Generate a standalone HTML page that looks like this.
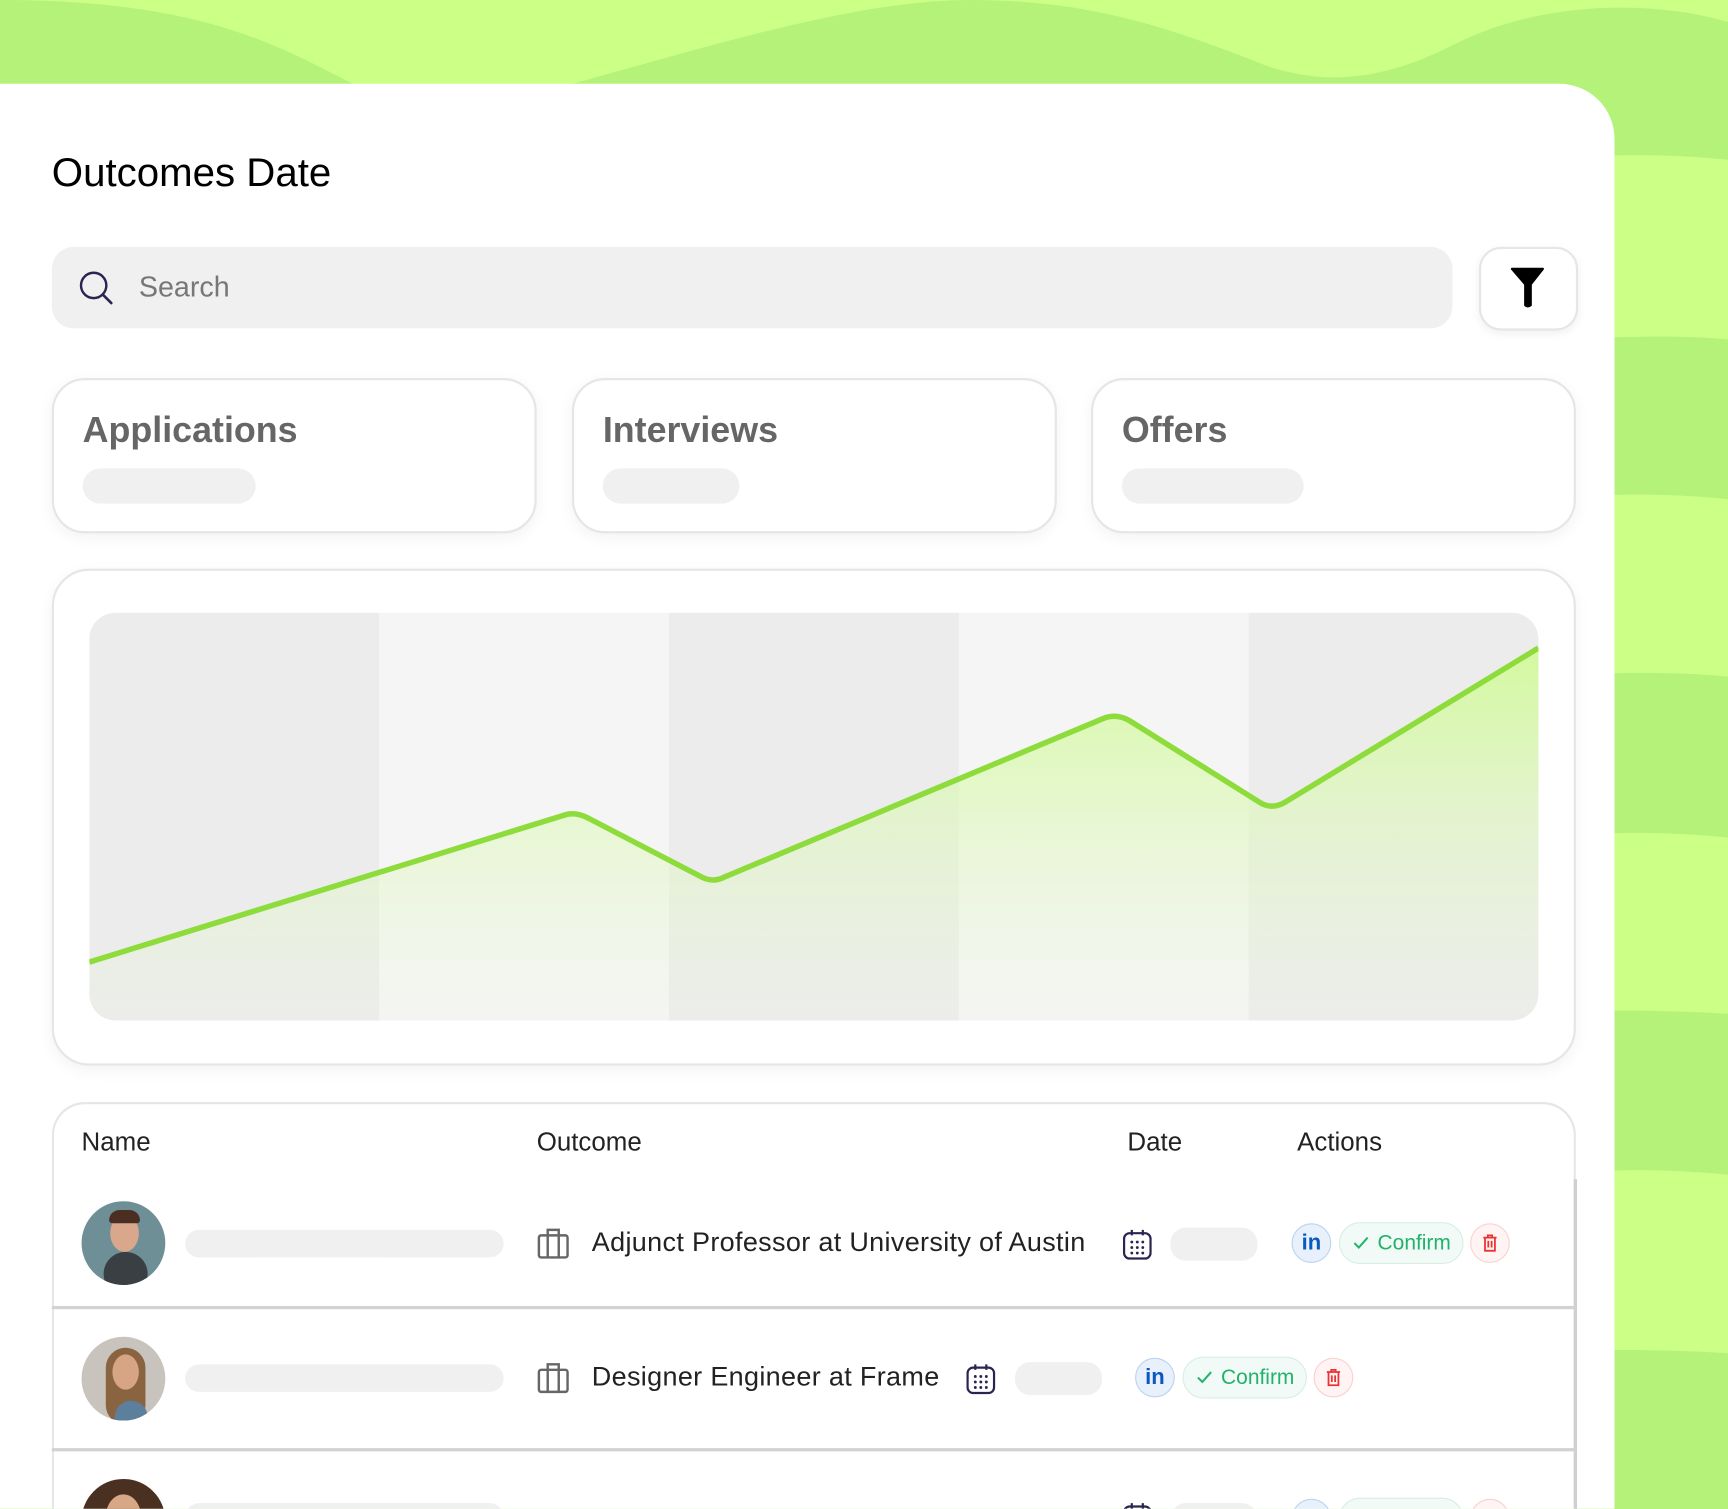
<!DOCTYPE html>
<html><head><meta charset="utf-8"><style>
html,body{margin:0;padding:0;width:1728px;height:1509px;overflow:hidden;background:#b5f27a}
#w{position:absolute;left:0;top:0;width:1568px;height:1369px;overflow:hidden;transform:scale(1.10204);transform-origin:0 0;font-family:"Liberation Sans",sans-serif}
.abs{position:absolute}
.card{position:absolute;background:#fff;border:2px solid #e6e6e6;box-shadow:0 4px 14px rgba(0,0,0,.05)}
.pill{position:absolute;background:#f0f0f0;border-radius:16px}
.stat{font-size:32.5px;font-weight:bold;color:#666;position:absolute;left:26px;top:27px}
.th{position:absolute;top:1023px;font-size:23.5px;color:#222}
.txt{position:absolute;font-size:24.5px;color:#222;letter-spacing:.3px}
.circ{position:absolute;width:36px;height:36px;border-radius:50%;box-sizing:border-box}
.in{background:#e8f1fb;border:1.5px solid #b9d3f0;color:#0a58c2;font-weight:bold;font-size:20px;text-align:center;line-height:34px}
.tr{background:#fff3f3;border:1.5px solid #fbd0d0}
.cf{position:absolute;height:38px;width:113px;border-radius:20px;background:#f1faf6;border:1.5px solid #d6efe3;box-sizing:border-box;color:#22b26a;font-size:19px;line-height:38px;padding-left:34px}
.cf svg{position:absolute;left:12px;top:12px}
.av{position:absolute;width:76px;height:76px;border-radius:50%;overflow:hidden}
</style></head><body><div id="w">
<svg class="abs" style="left:0;top:0" width="1568" height="1369">
<rect width="1568" height="1369" fill="#b5f27a"/>
<path d="M0 0H1568V20C1500 0 1400 0 1320 40 1250 76 1200 76 1150 60 1050 20 980 0 880 0 780 0 650 40 520 76H320C250 40 180 0 0 0Z" fill="#cbff85"/>
<path d="M1465 141C1500 140 1540 142 1568 145V308C1540 305 1500 305 1465 306Z" fill="#cbff85"/>
<path d="M1465 449C1500 448 1540 450 1568 453V614C1540 611 1500 610 1465 611Z" fill="#cbff85"/>
<path d="M1465 756C1500 755 1540 757 1568 760V920C1540 918 1500 917 1465 917Z" fill="#cbff85"/>
<path d="M1465 1062C1500 1061 1540 1063 1568 1066V1228C1540 1226 1500 1225 1465 1225Z" fill="#cbff85"/>
</svg>
<div class="abs" style="left:0;top:76px;width:1465px;height:1300px;background:#fff;border-top-right-radius:50px"></div>
<div class="abs" style="left:47px;top:136px;font-size:36.5px;color:#000">Outcomes Date</div>
<div class="abs" style="left:47px;top:224px;width:1271px;height:74px;background:#f0f0f0;border-radius:20px"></div>
<svg class="abs" style="left:70px;top:244px" width="34" height="34" viewBox="0 0 34 34"><circle cx="15" cy="15" r="11.5" fill="none" stroke="#2a2550" stroke-width="2.2"/><path d="M23.5 23.5L31 31" stroke="#2a2550" stroke-width="2.4" stroke-linecap="round"/></svg>
<div class="abs" style="left:126px;top:245px;font-size:26px;color:#777">Search</div>
<div class="abs" style="left:1342px;top:224px;width:86px;height:72px;border:2px solid #e6e6e6;border-radius:20px;background:#fff;box-shadow:0 3px 8px rgba(0,0,0,.06)"></div>
<svg class="abs" style="left:1370px;top:242px" width="32" height="38" viewBox="0 0 32 38"><path d="M2 2H30L19 16V35Q16 37 14 35V16Z" fill="#000" stroke="#000" stroke-width="2" stroke-linejoin="round"/></svg>
<div class="card" style="left:47px;top:343px;width:436px;height:137px;border-radius:30px"><div class="stat">Applications</div><div class="pill" style="left:26px;top:80px;width:157px;height:32px"></div></div>
<div class="card" style="left:519px;top:343px;width:436px;height:137px;border-radius:30px"><div class="stat">Interviews</div><div class="pill" style="left:26px;top:80px;width:124px;height:32px"></div></div>
<div class="card" style="left:990px;top:343px;width:436px;height:137px;border-radius:30px"><div class="stat">Offers</div><div class="pill" style="left:26px;top:80px;width:165px;height:32px"></div></div>
<div class="card" style="left:47px;top:516px;width:1379px;height:447px;border-radius:34px"></div>
<svg class="abs" style="left:81px;top:556px" width="1315" height="370" viewBox="0 0 1315 370">
<defs><clipPath id="c"><rect width="1315" height="370" rx="24"/></clipPath>
<linearGradient id="g" x1="0" y1="0" x2="0" y2="1"><stop offset="0" stop-color="#d2fa9a" stop-opacity=".95"/><stop offset="1" stop-color="#e9f7d8" stop-opacity=".1"/></linearGradient></defs>
<g clip-path="url(#c)">
<rect width="1315" height="370" fill="#ececec"/>
<rect x="263" width="263" height="370" fill="#f5f5f5"/>
<rect x="789" width="263" height="370" fill="#f5f5f5"/>
<path d="M0 317L430 184Q440 180 452 186L556 240Q566 245 576 240L920 96Q932 91 944 98L1062 172Q1073 179 1085 172L1315 32V370H0Z" fill="url(#g)"/>
<path d="M0 317L430 184Q440 180 452 186L556 240Q566 245 576 240L920 96Q932 91 944 98L1062 172Q1073 179 1085 172L1315 32" fill="none" stroke="#8edc3c" stroke-width="5" stroke-linejoin="round"/>
</g></svg>
<div class="abs" style="left:47px;top:1000px;width:1379px;height:400px;border:2px solid #e6e6e6;border-bottom:none;border-radius:30px 30px 0 0;background:#fff"></div>
<div class="abs" style="left:1428px;top:1070px;width:3px;height:300px;background:#cfcfcf"></div>
<div class="th" style="left:74px">Name</div><div class="th" style="left:487px">Outcome</div><div class="th" style="left:1023px">Date</div><div class="th" style="left:1177px">Actions</div>
<div class="abs" style="left:47px;top:1185px;width:1383px;height:3px;background:#d2d2d2"></div>
<div class="abs" style="left:47px;top:1314px;width:1383px;height:3px;background:#d2d2d2"></div>

<div class="av" style="left:74px;top:1090px;background:#6f8f96"><div class="abs" style="left:20px;top:46px;width:40px;height:40px;border-radius:50%;background:#3a3f44"></div><div class="abs" style="left:26px;top:12px;width:26px;height:34px;border-radius:50%;background:#d9a88c"></div><div class="abs" style="left:25px;top:8px;width:28px;height:12px;border-radius:10px 10px 3px 3px;background:#4a2e22"></div></div>
<div class="av" style="left:74px;top:1213px;background:#c9c3bd"><div class="abs" style="left:22px;top:10px;width:36px;height:70px;border-radius:18px;background:#8a6440"></div><div class="abs" style="left:28px;top:16px;width:24px;height:32px;border-radius:50%;background:#d7a583"></div><div class="abs" style="left:30px;top:58px;width:30px;height:30px;background:#5b7f9c;border-radius:50%"></div></div>
<div class="av" style="left:74px;top:1342px;background:#4a3020"><div class="abs" style="left:22px;top:14px;width:32px;height:40px;border-radius:50%;background:#d8a886"></div></div>

<div class="pill" style="left:168px;top:1116px;width:289px;height:25px;border-radius:13px"></div>
<div class="pill" style="left:168px;top:1238px;width:289px;height:25px;border-radius:13px"></div>
<div class="pill" style="left:168px;top:1364px;width:289px;height:25px;border-radius:13px"></div>

<svg class="abs" style="left:487px;top:1113px" width="30" height="30" viewBox="0 0 30 30"><rect x="2" y="8" width="26" height="20" rx="2" fill="none" stroke="#666" stroke-width="2.2"/><path d="M10 8V3H20V8M10 8V28M20 8V28" fill="none" stroke="#666" stroke-width="2.2"/></svg>
<svg class="abs" style="left:487px;top:1235px" width="30" height="30" viewBox="0 0 30 30"><rect x="2" y="8" width="26" height="20" rx="2" fill="none" stroke="#666" stroke-width="2.2"/><path d="M10 8V3H20V8M10 8V28M20 8V28" fill="none" stroke="#666" stroke-width="2.2"/></svg>
<div class="txt" style="left:537px;top:1114px">Adjunct Professor at University of Austin</div>
<div class="txt" style="left:537px;top:1236px">Designer Engineer at Frame</div>

<svg class="abs" style="left:1018px;top:1114px" width="28" height="30" viewBox="0 0 28 30"><rect x="2" y="5" width="24" height="23" rx="5" fill="none" stroke="#2a2550" stroke-width="2"/><path d="M9 2V7M19 2V7" stroke="#2a2550" stroke-width="2"/><g fill="#2a2550"><circle cx="9" cy="13" r="1.3"/><circle cx="14" cy="13" r="1.3"/><circle cx="19" cy="13" r="1.3"/><circle cx="9" cy="18" r="1.3"/><circle cx="14" cy="18" r="1.3"/><circle cx="19" cy="18" r="1.3"/><circle cx="9" cy="23" r="1.3"/><circle cx="14" cy="23" r="1.3"/><circle cx="19" cy="23" r="1.3"/></g></svg>
<svg class="abs" style="left:876px;top:1236px" width="28" height="30" viewBox="0 0 28 30"><rect x="2" y="5" width="24" height="23" rx="5" fill="none" stroke="#2a2550" stroke-width="2"/><path d="M9 2V7M19 2V7" stroke="#2a2550" stroke-width="2"/><g fill="#2a2550"><circle cx="9" cy="13" r="1.3"/><circle cx="14" cy="13" r="1.3"/><circle cx="19" cy="13" r="1.3"/><circle cx="9" cy="18" r="1.3"/><circle cx="14" cy="18" r="1.3"/><circle cx="19" cy="18" r="1.3"/><circle cx="9" cy="23" r="1.3"/><circle cx="14" cy="23" r="1.3"/><circle cx="19" cy="23" r="1.3"/></g></svg>
<div class="pill" style="left:1062px;top:1114px;width:79px;height:30px;border-radius:14px"></div>
<div class="pill" style="left:921px;top:1236px;width:79px;height:30px;border-radius:14px"></div>

<div class="circ in" style="left:1172px;top:1110px">in</div>
<div class="cf" style="left:1215px;top:1109px"><svg width="14" height="12" viewBox="0 0 14 12"><path d="M1 6L5 10L13 1" fill="none" stroke="#22b26a" stroke-width="1.8"/></svg>Confirm</div>
<div class="circ tr" style="left:1334px;top:1110px"><svg style="position:absolute;left:10px;top:9px" width="14" height="16" viewBox="0 0 14 16"><path d="M1 3H13M5 3V1H9V3M2.5 3V15H11.5V3M5.5 6V12M8.5 6V12" fill="none" stroke="#ee3030" stroke-width="1.6"/></svg></div>

<div class="circ in" style="left:1030px;top:1232px">in</div>
<div class="cf" style="left:1073px;top:1231px"><svg width="14" height="12" viewBox="0 0 14 12"><path d="M1 6L5 10L13 1" fill="none" stroke="#22b26a" stroke-width="1.8"/></svg>Confirm</div>
<div class="circ tr" style="left:1192px;top:1232px"><svg style="position:absolute;left:10px;top:9px" width="14" height="16" viewBox="0 0 14 16"><path d="M1 3H13M5 3V1H9V3M2.5 3V15H11.5V3M5.5 6V12M8.5 6V12" fill="none" stroke="#ee3030" stroke-width="1.6"/></svg></div>

<svg class="abs" style="left:1018px;top:1362px" width="28" height="30" viewBox="0 0 28 30"><rect x="2" y="5" width="24" height="23" rx="5" fill="none" stroke="#2a2550" stroke-width="2"/><path d="M9 2V7M19 2V7" stroke="#2a2550" stroke-width="2"/></svg>
<div class="pill" style="left:1062px;top:1364px;width:79px;height:30px;border-radius:14px"></div>
<div class="circ in" style="left:1172px;top:1360px"></div>
<div class="cf" style="left:1215px;top:1359px"></div>
<div class="circ tr" style="left:1334px;top:1360px"></div>
</div></body></html>
